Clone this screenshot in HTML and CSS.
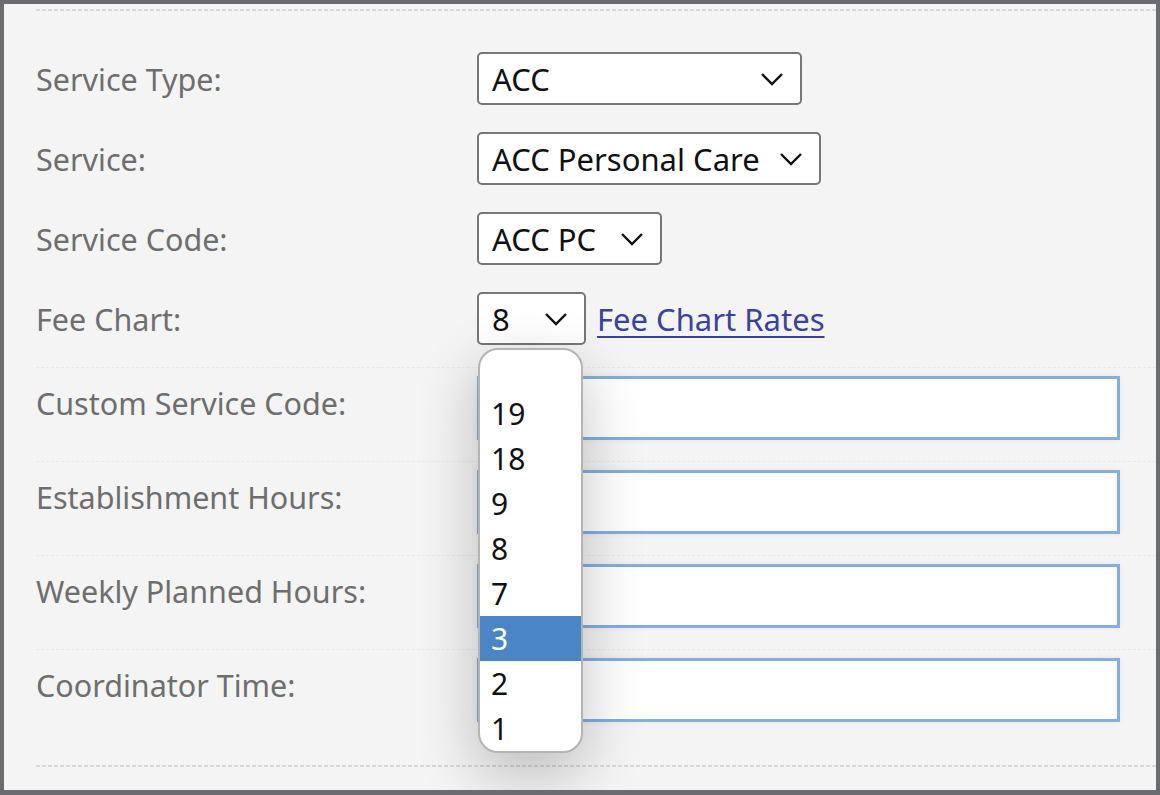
FILE: index.html
```html
<!DOCTYPE html>
<html lang="en">
<head>
    <meta charset="UTF-8">
    <meta name="viewport" content="width=device-width, initial-scale=1.0">
    <title>Service Details</title>
    <link rel="stylesheet" href="styles.css">
</head>
<body>
    <div class="frame">
        <div class="form">
            <div class="row row-select">
                <label class="label">Service Type:</label>
                <div class="select select-type">
                    <span>ACC</span>
                    <svg class="chevron" viewBox="0 0 24 14"><path d="M2 2 L12 12 L22 2"/></svg>
                </div>
            </div>
            <div class="row row-select">
                <label class="label">Service:</label>
                <div class="select select-service">
                    <span>ACC Personal Care</span>
                    <svg class="chevron" viewBox="0 0 24 14"><path d="M2 2 L12 12 L22 2"/></svg>
                </div>
            </div>
            <div class="row row-select">
                <label class="label">Service Code:</label>
                <div class="select select-code">
                    <span>ACC PC</span>
                    <svg class="chevron" viewBox="0 0 24 14"><path d="M2 2 L12 12 L22 2"/></svg>
                </div>
            </div>
            <div class="row row-select row-fee">
                <label class="label">Fee Chart:</label>
                <div class="fee-cell">
                    <div class="select select-fee">
                        <span>8</span>
                        <svg class="chevron" viewBox="0 0 24 14"><path d="M2 2 L12 12 L22 2"/></svg>
                    </div>
                    <a href="#" class="link">Fee Chart Rates</a>
                    <ul class="dropdown">
                        <li class="blank"></li>
                        <li>19</li>
                        <li>18</li>
                        <li>9</li>
                        <li>8</li>
                        <li>7</li>
                        <li class="active">3</li>
                        <li>2</li>
                        <li>1</li>
                    </ul>
                </div>
            </div>
            <div class="row row-input">
                <label class="label">Custom Service Code:</label>
                <input type="text" class="field">
            </div>
            <div class="row row-input">
                <label class="label">Establishment Hours:</label>
                <input type="text" class="field">
            </div>
            <div class="row row-input">
                <label class="label">Weekly Planned Hours:</label>
                <input type="text" class="field">
            </div>
            <div class="row row-input">
                <label class="label">Coordinator Time:</label>
                <input type="text" class="field">
            </div>
            <div class="form-end"></div>
        </div>
    </div>
</body>
</html>
```

FILE: styles.css
```css
body {
    margin: 0;
    font-family: "Noto Sans", "Open Sans", sans-serif;
}

.frame {
    height: 795px;
    box-sizing: border-box;
    border: 4px solid #6b6c70;
    border-bottom-width: 5px;
    background-color: #f4f4f4;
    overflow: hidden;
}

.form {
    margin: 5px 0 0 32px;
    padding-top: 43px;
    background-image: repeating-linear-gradient(90deg, #d8d8d8 0 4px, transparent 4px 6px);
    background-size: 100% 2px;
    background-repeat: no-repeat;
}

.row {
    display: grid;
    grid-template-columns: 441px 1fr;
}

.label {
    font-size: 30.5px;
    line-height: 38px;
    color: #6e6e6e;
}

.row-select {
    align-items: center;
    margin-bottom: 27px;
}

.row-fee {
    margin-top: 2px;
    margin-bottom: 0;
}

.select {
    box-sizing: border-box;
    height: 53px;
    display: flex;
    align-items: center;
    justify-content: space-between;
    padding: 0 16px 0 13px;
    background-color: #fff;
    border: 2px solid #767676;
    border-radius: 5px;
    font-size: 31px;
    color: #111;
}

.select-type { width: 325px; }
.select-service { width: 344px; }
.select-code { width: 185px; }
.select-fee { width: 109px; }

.chevron {
    width: 24px;
    height: 14px;
    flex: none;
    fill: none;
    stroke: #111;
    stroke-width: 2.4;
}

.fee-cell {
    position: relative;
    display: flex;
    align-items: center;
    gap: 11px;
}

.link {
    font-size: 31px;
    color: #3b40a4;
    text-decoration-thickness: 2px;
    text-underline-offset: 5px;
}

.dropdown {
    position: absolute;
    top: 56px;
    left: 1px;
    z-index: 2;
    width: 105px;
    box-sizing: border-box;
    margin: 0;
    padding: 0;
    list-style: none;
    background-color: #fff;
    border: 2px solid #b4b4b4;
    border-radius: 20px;
    box-shadow: 0 20px 60px rgba(0, 0, 0, 0.24);
    overflow: hidden;
}

.dropdown li {
    height: 45px;
    line-height: 45px;
    padding-left: 11px;
    font-size: 30px;
    color: #111;
}

.dropdown li.blank {
    height: 41px;
}

.dropdown li.active {
    background-color: #4a86c6;
    color: #fff;
}

.row-input {
    align-items: start;
    border-top: 1px dashed #e8e8e8;
    padding: 8px 0 21px;
}

.row-fee + .row-input {
    margin-top: 22px;
}

.row-input .label {
    margin-top: 8px;
}

.field {
    box-sizing: border-box;
    width: 643px;
    height: 64px;
    margin: 0;
    border: 3px solid #84aee0;
    background-color: #fff;
    box-shadow: 0 0 6px rgba(0, 0, 0, 0.06);
}

.form-end {
    margin-top: 22px;
    height: 2px;
    background-image: repeating-linear-gradient(90deg, #d8d8d8 0 4px, transparent 4px 6px);
}
```
